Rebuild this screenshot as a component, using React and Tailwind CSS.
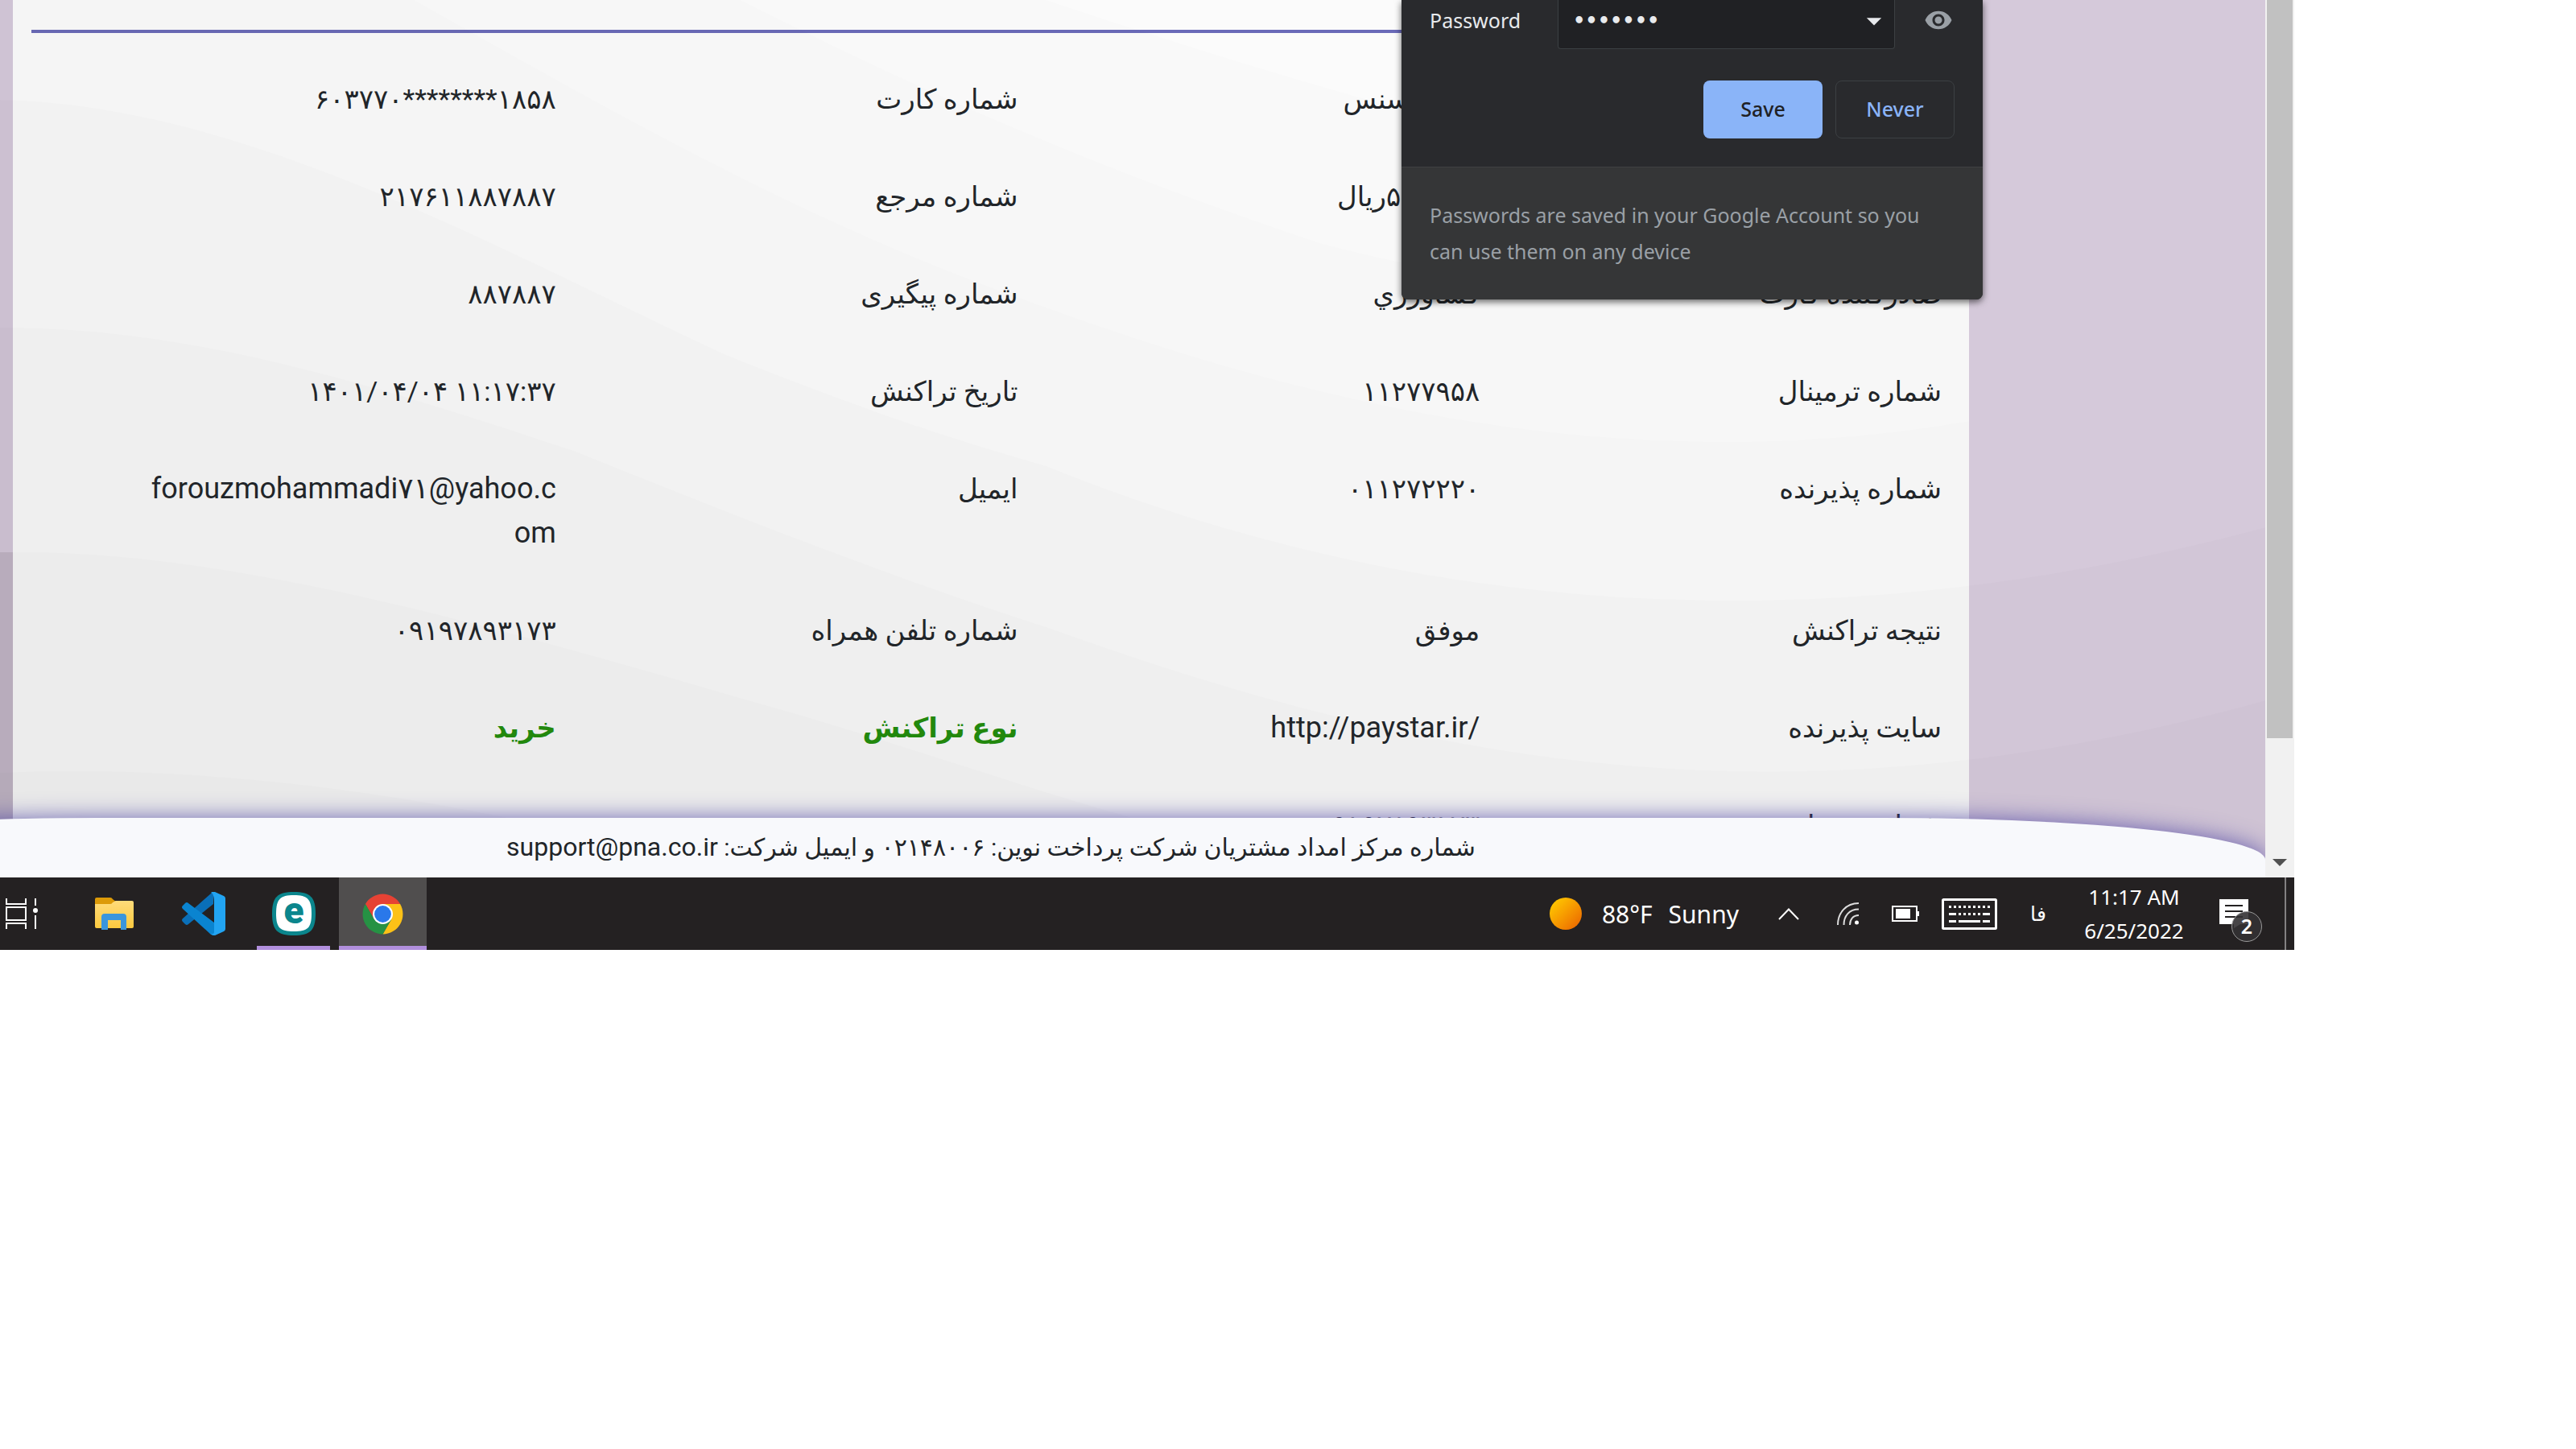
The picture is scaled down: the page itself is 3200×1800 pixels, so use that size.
import { MdVisibility, MdArrowDropDown } from "react-icons/md";

const rows = [
  ["نام پذیرنده", "وب لایسنس", "شماره کارت", "۶۰۳۷۷۰********۱۸۵۸"],
  ["مبلغ تراکنش", "۵۵۰,۰۰۰ریال", "شماره مرجع", "۲۱۷۶۱۱۸۸۷۸۸۷"],
  ["صادرکننده کارت", "کشاورزي", "شماره پیگیری", "۸۸۷۸۸۷"],
  ["شماره ترمینال", "۱۱۲۷۷۹۵۸", "تاریخ تراکنش", "۱۴۰۱/۰۴/۰۴ ۱۱:۱۷:۳۷"],
  ["شماره پذیرنده", "۰۱۱۲۷۲۲۲۰", "ایمیل", "forouzmohammadi۷۱@yahoo.com"],
  ["نتیجه تراکنش", "موفق", "شماره تلفن همراه", "۰۹۱۹۷۸۹۳۱۷۳"],
  ["سایت پذیرنده", "http://paystar.ir/", "نوع تراکنش", "خرید"],
  ["شماره همراه", "۰۹۱۹۷۸۹۳۱۷۳", "", ""],
];

function Cell({ text, highlight, header }) {
  const latin = /[a-z]/.test(text);
  const ltr = /^[a-z۰-۹]/.test(text) && !/[آ-ی]/.test(text);
  const Tag = header ? "th" : "td";
  return (
    <Tag
      scope={header ? "row" : undefined}
      className={
        "py-[33px] pr-[11px] pl-[50px] text-right align-top leading-[55px] " +
        (latin ? "text-[36px] break-all " : "text-[34px] ") +
        (highlight ? "font-bold text-[#22880d]" : "font-normal")
      }
    >
      <bdi dir={ltr ? "ltr" : "rtl"} className="block text-right">{text}</bdi>
    </Tag>
  );
}

function Waves() {
  return (
    <svg className="pointer-events-none absolute inset-0 size-full" viewBox="0 0 2814 1090" preserveAspectRatio="none" aria-hidden="true">
      <g fill="#000" fillOpacity="0.008">
        <path d="M1300 0C1480 60 1640 108 1741 135C2000 200 2250 230 2446 215V1090H0V0Z" />
        <path d="M920 0C1080 80 1300 188 1640 302C1900 370 2200 400 2446 372V1090H0V0Z" />
        <path d="M515 0C755 135 1000 278 1300 382C1600 490 2000 600 2446 523V1090H0V0Z" />
      </g>
      <g fill="#000" fillOpacity="0.01">
        <path d="M0 124C300 130 600 300 900 440C1100 520 1200 550 1300 579C1700 740 2200 820 2814 655V1090H0Z" />
        <path d="M0 407C250 405 500 490 713 560C900 635 1100 715 1300 779C1750 940 2200 1040 2814 870V1090H0Z" />
        <path d="M0 686C300 680 650 790 1000 890C1150 935 1280 980 1400 1014L1600 1090H0Z" />
        <path d="M0 960C200 950 440 975 640 1018L900 1090H0Z" />
      </g>
      <path d="M0 686H16V1090H0Z" fill="#000" fillOpacity="0.07" />
    </svg>
  );
}

function PasswordBubble() {
  return (
    <section aria-label="Save password" className="absolute top-0 right-[387px] z-20 w-[722px] overflow-hidden rounded-b-lg bg-[#292a2d] font-['Noto_Sans',sans-serif] text-[25px] text-[#e8eaed] shadow-[0_3px_8px_rgba(0,0,0,0.6)]">
      <div className="flex h-[61px] items-stretch pl-[35px]">
        <label htmlFor="pw" className="w-[159px] pb-[11px] leading-[50px]">Password</label>
        <div className="relative w-[419px]">
          <input
            id="pw"
            type="password"
            defaultValue="1234567"
            className="size-full rounded-b border border-t-0 border-[#3c4043] bg-[#202124] pb-[8px] pl-[18px] font-['DejaVu_Sans',sans-serif] text-[24px] font-bold outline-none"
          />
          <button aria-label="Show saved passwords" className="absolute top-[4px] right-[4px]">
            <MdArrowDropDown className="size-[44px]" />
          </button>
        </div>
        <button aria-label="Show password" className="ml-[36px] pb-[12px] text-[#9aa0a6]">
          <MdVisibility className="size-[36px]" />
        </button>
      </div>
      <div className="flex justify-end gap-4 px-[35px] pt-[39px] pb-[35px] font-medium">
        <button className="h-[72px] w-[148px] rounded-lg bg-[#8ab4f8] text-[#202124]">Save</button>
        <button className="h-[72px] w-[148px] rounded-lg border border-[#3c4043] text-[#8ab4f8]">Never</button>
      </div>
      <p className="border-t border-[#3f4042] bg-[#353637] py-[37px] pr-[40px] pl-[35px] leading-[45px] text-[#9aa0a6]">
        Passwords are saved in your Google Account so you can use them on any device
      </p>
    </section>
  );
}

function TaskViewIcon() {
  return (
    <svg viewBox="0 0 41 38" className="ml-[7px] w-[41px]" fill="none" stroke="#fff" strokeWidth="2">
      <path d="M1 0V7H25V0M1 38V31H25V38M1 11H25V27H1ZM37 0V9M37 21V38" />
      <circle cx="37" cy="15" r="3" fill="#fff" stroke="none" />
    </svg>
  );
}

function FolderIcon() {
  return (
    <svg viewBox="0 0 48 40" className="w-[48px]">
      <defs>
        <linearGradient id="folder" x1="0" y1="0" x2="0" y2="1">
          <stop stopColor="#ffdc7a" />
          <stop offset="1" stopColor="#fcc93f" />
        </linearGradient>
      </defs>
      <path d="M0 2Q0 0 2 0H19Q21 0 22 2L26 5V14H0Z" fill="#dc9a08" />
      <path d="M0 8H19Q21 8 22 6L24 5Q25 4 26 4H46Q48 4 48 6V36Q48 38 46 38H2Q0 38 0 36Z" fill="url(#folder)" />
      <path d="M8 40V24Q8 20 12 20H35Q39 20 39 24V40H32V28H16V40Z" fill="#3a96dd" />
    </svg>
  );
}

function CodeIcon() {
  return (
    <svg viewBox="0 0 54 54" className="w-[54px]">
      <path d="M39 0V15L8 40Q6 42 4 40L1 37Q-1 35 1 33L36 2Q37 0 39 0Z" fill="#0a6fb8" />
      <path d="M1 17L4 14Q6 12 8 14L40 38V54Q37 54 35 52L1 21Q-1 19 1 17Z" fill="#0a84d0" />
      <path d="M40 38V15Q40 1 36 1Q38 -1 41 0L52 5Q54 6 54 8V46Q54 48 52 49L41 54Q38 54 35 52Q40 53 40 50Z" fill="#22a4f2" />
    </svg>
  );
}

function EsetIcon() {
  return (
    <svg viewBox="0 0 54 54" className="w-[54px]">
      <path d="M27 0C47 0 54 6 54 27S47 54 27 54S0 48 0 27S7 0 27 0Z" fill="#0b868d" />
      <path d="M27 4C44 4 49 9 49 27S44 49 27 49S5 45 5 27S10 4 27 4Z" fill="#fff" />
      <text x="27" y="39" textAnchor="middle" fill="#0b868d" className="font-[Roboto,sans-serif] text-[46px] font-black">e</text>
    </svg>
  );
}

function ChromeIcon() {
  return (
    <svg viewBox="-24 -24 48 48" className="mt-[5px] size-[51px]">
      <path d="M-20.35 -11.75A23.5 23.5 0 0 1 20.35 -11.75H0L-10.18 5.88Z" fill="#e64234" />
      <path d="M20.35 -11.75A23.5 23.5 0 0 1 0 23.5L10.18 5.88L0 -11.75Z" fill="#fcc117" />
      <path d="M0 23.5A23.5 23.5 0 0 1 -20.35 -11.75L-10.18 5.88H10.18Z" fill="#269244" />
      <circle r="11.75" fill="#fff" />
      <circle r="9.8" fill="#2a78ea" />
    </svg>
  );
}

function Taskbar() {
  return (
    <nav aria-label="Taskbar" className="flex h-[90px] items-stretch overflow-hidden bg-[#242122] font-['Noto_Sans',sans-serif] text-white">
      <button aria-label="Task view" className="flex w-[88px] items-center">
        <TaskViewIcon />
      </button>
      <button aria-label="File Explorer" className="flex w-[108px] items-center justify-center">
        <FolderIcon />
      </button>
      <button aria-label="Visual Studio Code" className="flex w-[114px] items-center justify-center">
        <CodeIcon />
      </button>
      <button aria-label="ESET" className="ml-[9px] flex w-[91px] items-center justify-center border-b-[5px] border-[#b18fdd] pt-[5px]">
        <EsetIcon />
      </button>
      <button aria-label="Google Chrome" className="ml-[11px] flex w-[109px] items-center justify-center border-b-[5px] border-[#b18fdd] bg-[#504e4e]">
        <ChromeIcon />
      </button>

      <div className="ml-auto flex items-center">
        <button className="flex items-center text-[30px]">
          <span className="mr-[25px] size-[40px] rounded-full bg-linear-to-br from-[#ffd200] to-[#e85d00]" />
          <span className="mr-[20px]">88°F</span>
          <span>Sunny</span>
        </button>
        <button aria-label="Show hidden icons" className="ml-[49px]">
          <svg viewBox="0 0 26 15" className="w-[26px]" fill="none" stroke="#fff" strokeWidth="2">
            <path d="M1 14L13 1.500L25 14" />
          </svg>
        </button>
        <button aria-label="Network" className="ml-[47px]">
          <svg viewBox="0 0 27 28" className="w-[27px]" fill="none" stroke="#ddd" strokeWidth="2">
            <path d="M1 28C1 13 11 1 27 1M8.500 28C8.500 17 15 8.500 27 8.500M16 28C16 21 20 16 27 16" />
            <circle cx="24.500" cy="25" r="2.500" fill="#fff" stroke="none" />
          </svg>
        </button>
        <button aria-label="Battery" className="ml-[41px]">
          <svg viewBox="0 0 34 20" className="w-[34px]" fill="#fff">
            <path d="M1 1H31V19H1Z" fill="none" stroke="#fff" strokeWidth="2" />
            <path d="M5 4H23V16H5ZM32 7H34V13H32Z" />
          </svg>
        </button>
        <button aria-label="Touch keyboard" className="ml-[28px]">
          <svg viewBox="0 0 69 39" className="w-[69px]" fill="none" stroke="#fff" strokeWidth="3">
            <rect x="1.500" y="1.500" width="66" height="36" rx="1" />
            <path d="M9 10.500H61" strokeDasharray="3" />
            <path d="M21 19.500H48" strokeDasharray="3" />
            <path d="M9 19.500H18M51 19.500H60M9 28.500H18M21 28.500H48M51 28.500H60" />
          </svg>
        </button>
        <button lang="fa" className="ml-[21px] w-[60px] text-[25px]">فا</button>
        <button className="ml-[14px] w-[150px] text-center text-[26px] leading-[42px]">
          <time className="block">11:17 AM</time>
          <time className="block">6/25/2022</time>
        </button>
        <button aria-label="2 new notifications" className="relative ml-[31px] flex w-[81px]">
          <svg viewBox="0 0 36 36" className="w-[36px]">
            <path d="M0 0H36V31H26L18 36V31H0Z" fill="#fff" />
            <path d="M7 8H29M7 15H29M7 22H29" stroke="#242122" strokeWidth="2" />
          </svg>
          <span className="absolute top-[15px] left-[15px] flex size-[38px] items-center justify-center rounded-full border border-[#999] bg-[#333133]/90 text-[25px] font-semibold">2</span>
        </button>
        <div className="mr-[10px] h-[90px] w-[2px] bg-[#838182]" />
      </div>
    </nav>
  );
}

export default function App() {
  return (
    <div className="min-h-screen bg-white pr-[350px]">
      <div className="relative">
        <div className="flex">
          <main dir="rtl" lang="fa" className="relative flex-1 overflow-hidden bg-[#d5c9da] font-[Roboto,'DejaVu_Sans',sans-serif] text-[#212529]">
            <div className="mr-[368px] ml-[16px] bg-[#fbfbfb] px-[23px] pt-[37px] pb-[4px]">
              <hr className="border-t-4 border-[#6a6ab8]" />
              <div className="pt-[22px] pl-[89px]">
                <table className="relative z-10 w-full table-fixed">
                  <tbody>
                    {rows.map(([a, b, c, d], i) => (
                      <tr key={i}>
                        <Cell header text={a} />
                        <Cell text={b} />
                        <Cell text={c} highlight={i === 6} />
                        <Cell text={d} highlight={i === 6} />
                      </tr>
                    ))}
                  </tbody>
                </table>
              </div>
            </div>
            <Waves />
            <footer className="absolute right-0 bottom-0 -left-[352px] z-10 h-[74px] rounded-t-[475px_52px] bg-[#f8f9fc] text-center text-[30px] leading-[72px] shadow-[0_0_28px_rgba(70,60,160,0.75)]">
              شماره مرکز امداد مشتریان شرکت پرداخت نوین: ۰۲۱۴۸۰۰۶ و ایمیل شرکت:{" "}
              <a href="mailto:support@pna.co.ir" className="text-[32px]">support@pna.co.ir</a>
            </footer>
          </main>
          <div aria-hidden="true" className="flex w-[36px] flex-col items-center bg-[#f1f1f1]">
            <div className="w-[32px] flex-[23] bg-[#c1c1c1]" />
            <div className="flex flex-[4] items-end pb-[14px]">
              <svg viewBox="0 0 18 9" className="w-[18px] fill-[#505050]">
                <path d="M0 0H18L9 9Z" />
              </svg>
            </div>
          </div>
        </div>
        <PasswordBubble />
        <div className="relative z-30">
          <Taskbar />
        </div>
      </div>
    </div>
  );
}
